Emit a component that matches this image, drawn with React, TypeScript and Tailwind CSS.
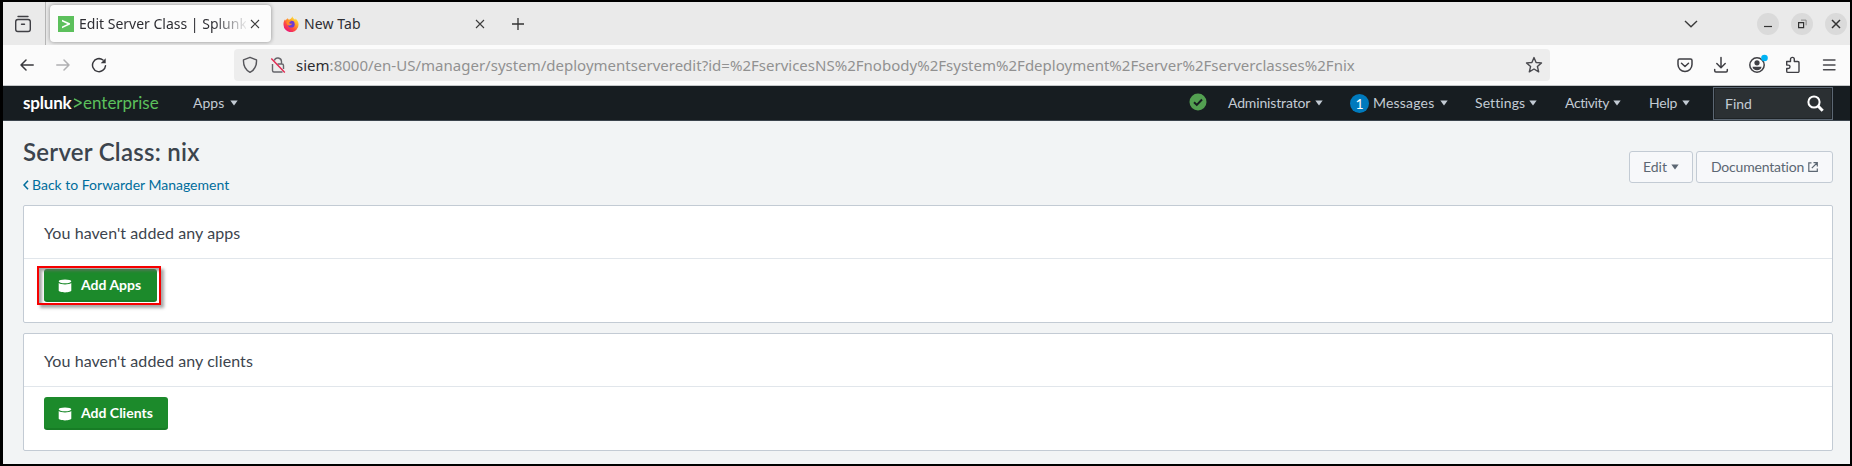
import type { ReactNode } from "react";

const Caret = ({ className = "text-[#c3cbd4]" }: { className?: string }) => (
  <svg width="8" height="6" viewBox="0 0 8 6" className={`shrink-0 ${className}`}>
    <path d="M0.3 0.5h7.4L4 5.6z" fill="currentColor" />
  </svg>
);

const WindowButton = ({ children }: { children: ReactNode }) => (
  <div className="flex size-[22px] shrink-0 items-center justify-center rounded-full bg-[#dadada]">
    <svg width="12" height="12" viewBox="0 0 12 12" fill="none" stroke="#333" strokeWidth="1.2">
      {children}
    </svg>
  </div>
);

const TabClose = () => (
  <svg width="10" height="10" viewBox="0 0 10 10" className="shrink-0" stroke="#3d3d3d" strokeWidth="1.1">
    <path d="M1 1l8 8M9 1L1 9" />
  </svg>
);

const Firefox = () => (
  <svg width="16" height="16" viewBox="0 0 16 16" className="shrink-0">
    <defs>
      <linearGradient id="flame" x1="0.85" y1="0.05" x2="0.2" y2="0.95">
        <stop offset="0" stopColor="#fff044" />
        <stop offset="0.35" stopColor="#ffa726" />
        <stop offset="0.65" stopColor="#ff4f3f" />
        <stop offset="1" stopColor="#e8127c" />
      </linearGradient>
    </defs>
    <path
      d="M9.4 0.2c.4 1.8 1.5 2.5 2.7 3.6.3-.3.4-.8.4-1.3 1.9 1.5 3.1 3.7 3.1 6A7.5 7.5 0 0 1 .5 8.7C.4 6.600 1 4.500 2.100 3.200c.1.6.3 1 .6 1.200C3.300 3.400 4 2.700 5 2.300c0 .6.2 1 .6 1.300C7 3.500 8.600 2.400 9.400.2z"
      fill="url(#flame)"
    />
    <circle cx="8.300" cy="8.200" r="3.400" fill="#6b3bd6" />
    <path d="M3.600 5.200c1.600-.9 3.600-.5 4.700.5-1.200 0-2 .5-2.100 1.300.7 1 2 .9 3 .6-.4 1.600-2.700 2.400-4.500 1.300C3.500 8.100 3.200 6.500 3.600 5.200z" fill="#ff8a2a" />
  </svg>
);

const MenuItem = ({ label, className }: { label: string; className: string }) => (
  <div className={`flex shrink-0 items-center justify-between text-[14px] ${className}`}>
    <span className="-mt-0.5">{label}</span>
    <Caret />
  </div>
);

const ServerIcon = () => (
  <svg width="14" height="14" viewBox="0 0 14 14" className="shrink-0" fill="#fff">
    <ellipse cx="7" cy="2.300" rx="6.300" ry="1.900" />
    <path d="M.7 4.100c1.400 1.100 3.700 1.400 6.300 1.400s4.900-.3 6.300-1.400v7.500c0 1.100-2.800 1.900-6.300 1.900S.7 12.700.7 11.600z" />
  </svg>
);

const AddButton = ({ label, className }: { label: string; className: string }) => (
  <button
    className={`flex h-[33px] items-center gap-[9px] rounded-[3px] border-b-2 border-[#177c25] bg-[#1c8a2b] pt-0.5 pl-[14px] text-[14px] font-bold text-white ${className}`}
  >
    <ServerIcon />
    <span className="-mt-0.5 whitespace-nowrap">{label}</span>
  </button>
);

const Panel = ({ title, children }: { title: string; children: ReactNode }) => (
  <section className="h-[118px] shrink-0 rounded-[2px] border border-[#c3cbd4] bg-white">
    <h2 className="flex h-[53px] items-center border-b border-[#e1e6eb] pt-px pl-5 text-[16px] tracking-[0.08px] text-[#3c444d]">{title}</h2>
    <div className="pt-[10px] pl-5">{children}</div>
  </section>
);

function TabStrip() {
  return (
    <div className="flex h-[43px] shrink-0 items-center bg-[#eaeaea] font-['Noto_Sans',sans-serif] text-[14px] text-[#2e2e33]">
      <div className="flex h-full w-[43px] shrink-0 items-center justify-center border-r border-[#b5b5b5] pr-0.5">
        <svg width="18" height="18" viewBox="0 0 18 18" fill="none" stroke="#3f3f44" strokeWidth="1.400" strokeLinecap="round">
          <path d="M4 1.500h10" />
          <rect x="1.700" y="4.500" width="14.600" height="12" rx="2.200" />
          <path d="M7.500 9.300h3" />
        </svg>
      </div>
      <div className="ml-1 flex h-[37px] w-[221px] shrink-0 items-center rounded bg-[#fcfcfc] pl-2 shadow-[0_0_4px_rgba(0,0,0,0.4)]">
        <svg width="16" height="16" viewBox="0 0 16 16" className="shrink-0">
          <path d="M0 0h16v16H0z" fill="#5cc05c" />
          <path d="M4 3.700l8 3.600v1.300l-8 3.700v-1.900l5.500-2.400L4 5.600z" fill="#fff" />
        </svg>
        <span className="ml-[5px] w-[167px] overflow-hidden whitespace-nowrap [mask-image:linear-gradient(to_right,#000_80%,transparent_102%)]">
          Edit Server Class | Splunk
        </span>
        <span className="ml-1">
          <TabClose />
        </span>
      </div>
      <div className="ml-3 flex w-[202px] shrink-0 items-center">
        <Firefox />
        <span className="ml-[5px] grow tracking-[0.1px]">New Tab</span>
        <TabClose />
      </div>
      <svg width="14" height="14" viewBox="0 0 14 14" className="ml-[26px] shrink-0" stroke="#333" strokeWidth="1.300">
        <path d="M7 1v12M1 7h12" />
      </svg>
      <svg width="14" height="8" viewBox="0 0 14 8" className="ml-auto shrink-0" fill="none" stroke="#3a3a3a" strokeWidth="1.400">
        <path d="M1 1l6 5.700L13 1" />
      </svg>
      <div className="mr-[3px] ml-[59px] flex gap-3">
        <WindowButton>
          <path d="M2 8.500h8" />
        </WindowButton>
        <WindowButton>
          <path d="M2.600 4.600h5v5h-5z" />
          <path d="M5 2.100h5.100v5.200" stroke="#888" strokeWidth="1" />
        </WindowButton>
        <WindowButton>
          <path d="M2 2l8 8M10 2l-8 8" strokeWidth="1.500" />
        </WindowButton>
      </div>
    </div>
  );
}

function Toolbar() {
  return (
    <div className="flex h-[41px] shrink-0 items-center border-b border-[#c4c7c9] bg-[#fbfbfb] font-['Noto_Sans',sans-serif]">
      <div className="flex w-[231px] shrink-0 items-center pl-[17px]">
        <svg width="14" height="12" viewBox="0 0 14 12" fill="none" stroke="#38383d" strokeWidth="1.500" strokeLinecap="round" strokeLinejoin="round">
          <path d="M13.200 6H1M6 1L1 6l5 5" />
        </svg>
        <svg width="14" height="12" viewBox="0 0 14 12" className="ml-[22px]" fill="none" stroke="#b0b0b2" strokeWidth="1.500" strokeLinecap="round" strokeLinejoin="round">
          <path d="M.8 6H13M8 1l5 5-5 5" />
        </svg>
        <svg width="16" height="16" viewBox="0 0 16 16" className="ml-[21px]" fill="none" stroke="#38383d" strokeWidth="1.500" strokeLinecap="round">
          <path d="M14.500 8.700A6.500 6.500 0 1 1 12 3" />
          <path d="M14.700 1.200v5H9.700z" fill="#38383d" stroke="none" />
        </svg>
      </div>
      <div className="flex h-8 w-[1316px] shrink-0 items-center rounded bg-[#ededed] pl-2">
        <svg width="16" height="18" viewBox="0 0 16 18" className="shrink-0" fill="none" stroke="#55555a" strokeWidth="1.400" strokeLinejoin="round">
          <path d="M8 1.300l6.500 2.600c.3 5.300-1.400 9.700-6.500 12.500C2.900 13.600 1.200 9.200 1.500 3.900z" />
        </svg>
        <svg width="16" height="18" viewBox="0 0 16 18" className="ml-3 shrink-0" fill="none" stroke="#66666b" strokeWidth="1.400">
          <path d="M2.500 8v6.500a1.500 1.500 0 0 0 1.500 1.500h8.500M7.500 8h4.500a1.500 1.500 0 0 1 1.500 1.500V13M4.300 4.500a3.700 3.700 0 0 1 7.200 1V8" />
          <path d="M1.300 2.500l13.500 14" stroke="#e22850" />
        </svg>
        <span className="ml-[10px] text-[15px] tracking-[0.012px] whitespace-nowrap text-[#919191]">
          <span className="text-[#2b2b30]">siem</span>
          :8000/en-US/manager/system/deploymentserveredit?id=%2FservicesNS%2Fnobody%2Fsystem%2Fdeployment%2Fserver%2Fserverclasses%2Fnix
        </span>
        <svg width="18" height="18" viewBox="0 0 18 18" className="mr-[7px] ml-auto shrink-0" fill="none" stroke="#4a4a4f" strokeWidth="1.400" strokeLinejoin="round">
          <path d="M9 1.600l2.100 4.900 5.400.4-4.100 3.600 1.300 5.300L9 13l-4.700 2.800 1.300-5.300L1.500 6.900l5.400-.4z" />
        </svg>
      </div>
      <div className="flex grow items-center justify-end gap-[18px] pr-3">
        <svg width="18" height="18" viewBox="0 0 18 18" fill="none" stroke="#3f3f44" strokeWidth="1.500" strokeLinecap="round" strokeLinejoin="round">
          <path d="M3.500 3h11A1.500 1.500 0 0 1 16 4.500v4a7 7 0 0 1-14 0v-4A1.500 1.500 0 0 1 3.500 3z" />
          <path d="M5.500 7.300L9 10.500l3.500-3.200" />
        </svg>
        <svg width="18" height="18" viewBox="0 0 18 18" fill="none" stroke="#3f3f44" strokeWidth="1.500" strokeLinecap="round" strokeLinejoin="round">
          <path d="M9 1.500v10M4.800 7.500L9 11.700l4.200-4.200M2.700 13.500v1.200c0 .7.500 1.200 1.200 1.200h10.200c.7 0 1.200-.5 1.200-1.200v-1.200" />
        </svg>
        <svg width="18" height="18" viewBox="0 0 18 18" className="overflow-visible">
          <circle cx="9" cy="9" r="7.200" fill="none" stroke="#3f3f44" strokeWidth="1.500" />
          <circle cx="9" cy="6.800" r="2.600" fill="#3f3f44" />
          <path d="M4.500 10.700h9c0 2-2 3.500-4.500 3.500s-4.500-1.500-4.500-3.500z" fill="#3f3f44" />
          <circle cx="16.500" cy="2" r="3.300" fill="#00b3f4" />
        </svg>
        <svg width="18" height="18" viewBox="0 0 18 18" fill="none" stroke="#3f3f44" strokeWidth="1.400" strokeLinejoin="round">
          <path d="M2.700 5.500h3.800V3.300a1.900 1.900 0 0 1 3.800 0v2.200h3.500a1.200 1.200 0 0 1 1.200 1.200v8.500a1.200 1.200 0 0 1-1.200 1.200H3.900a1.200 1.200 0 0 1-1.200-1.200v-2.700h1.600a1.700 1.700 0 0 0 0-3.400H2.700z" />
        </svg>
        <svg width="18" height="18" viewBox="0 0 18 18" stroke="#4a4a4f" strokeWidth="1.400" strokeLinecap="round">
          <path d="M3.500 4h11.500M3.500 9h11.500M3.500 13.700h11.500" />
        </svg>
      </div>
    </div>
  );
}

function NavBar() {
  return (
    <nav className="flex h-[35px] shrink-0 items-center border-b border-[#3c444d] bg-[#171d21] pr-[17px] pl-5 text-[#c3cbd4]">
      <div className="mb-0.5 flex w-[138px] items-center text-[17px] leading-none text-[#5cc05c]">
        <span className="w-[50px] font-bold tracking-[-0.2px] text-white">splunk</span>
        <svg width="9" height="10" viewBox="0 0 9 10" className="mt-0.5 mr-px shrink-0" fill="none" stroke="#5cc05c" strokeWidth="1.500">
          <path d="M1 .8l7 3.700v.6L1 9" />
        </svg>
        <span>enterprise</span>
      </div>
      <MenuItem label="Apps" className="ml-8 w-[45px]" />
      <svg width="18" height="18" viewBox="0 0 18 18" className="mb-0.5 ml-auto shrink-0">
        <circle cx="9" cy="9" r="8.500" fill="#53a051" />
        <path d="M5 9.200l2.800 2.700L13 6.500" fill="none" stroke="#171d21" strokeWidth="2" />
      </svg>
      <MenuItem label="Administrator" className="ml-[21px] w-[95px] tracking-[-0.15px]" />
      <div className="ml-[27px] flex size-[19px] items-center justify-center rounded-full bg-[#007abd] text-[14px] text-white">1</div>
      <MenuItem label="Messages" className="ml-1 w-[75px] tracking-[0.2px]" />
      <MenuItem label="Settings" className="ml-[27px] w-[62px] tracking-[0.1px]" />
      <MenuItem label="Activity" className="ml-[28px] w-[56px] tracking-[-0.4px]" />
      <MenuItem label="Help" className="ml-[28px] w-[41px] tracking-[-0.2px]" />
      <div className="mt-px ml-[23px] flex h-[33px] w-[120px] items-center justify-between border border-[#5c6773] bg-[#2b3033] pr-2 pl-[11px] text-[14px] shadow-[inset_0_0_0_1px_#1d2225]">
        <span>Find</span>
        <svg width="17" height="17" viewBox="0 0 17 17" fill="none" stroke="#fff">
          <circle cx="7" cy="7" r="5.600" strokeWidth="2" />
          <path d="M11 11l4.700 4.700" strokeWidth="3" />
        </svg>
      </div>
    </nav>
  );
}

export default function App() {
  return (
    <div className="flex h-[466px] w-[1852px] flex-col overflow-hidden border-t-2 border-r-2 border-b-2 border-l-[3px] border-black bg-[#f2f4f5] font-['Lato',sans-serif]">
      <TabStrip />
      <Toolbar />
      <NavBar />
      <main className="flex grow flex-col pr-[17px] pl-5">
        <header className="flex h-[84px] shrink-0 justify-between">
          <div>
            <h1 className="mt-[15px] text-[24px] leading-[32px] font-semibold tracking-[0.25px] text-[#3c444d]">Server Class: nix</h1>
            <a className="mt-[7px] flex items-center text-[14px] leading-[20px] text-[#006d9c]">
              <svg width="6" height="10" viewBox="0 0 6 10" className="mr-[3px]" fill="none" stroke="currentColor" strokeWidth="1.600">
                <path d="M5 .8L1 5l4 4.200" />
              </svg>
              Back to Forwarder Management
            </a>
          </div>
          <div className="mt-[30px] flex gap-[3px] text-[14px] text-[#5c6773]">
            <button className="flex h-8 w-16 items-center justify-center gap-1 rounded-[3px] border border-[#c3cbd4] bg-[#f7f8fa]">
              <span className="-mt-0.5">Edit</span>
              <Caret className="text-[#5c6773]" />
            </button>
            <button className="flex h-8 w-[137px] items-center justify-center gap-1 rounded-[3px] border border-[#c3cbd4] bg-[#f7f8fa]">
              <span className="-mt-0.5 tracking-[-0.2px]">Documentation</span>
              <svg width="10" height="10" viewBox="0 0 10 10" fill="none" stroke="currentColor" strokeWidth="1.200">
                <path d="M3.500.8H.8v8.500h8.500V6.500M5.500.7h3.800v3.800M9 1L3.800 6.200" />
              </svg>
            </button>
          </div>
        </header>
        <Panel title="You haven't added any apps">
          <div className="relative w-[113px]">
            <AddButton label="Add Apps" className="w-[113px]" />
            <div className="absolute -top-[3px] -left-[7px] h-[39px] w-[124px] border-2 border-[#f60000] shadow-[3px_3px_3px_rgba(0,0,0,0.35),inset_3px_3px_3px_rgba(110,110,110,0.6)]" />
          </div>
        </Panel>
        <div className="h-[10px] shrink-0" />
        <Panel title="You haven't added any clients">
          <AddButton label="Add Clients" className="w-[124px]" />
        </Panel>
      </main>
    </div>
  );
}
